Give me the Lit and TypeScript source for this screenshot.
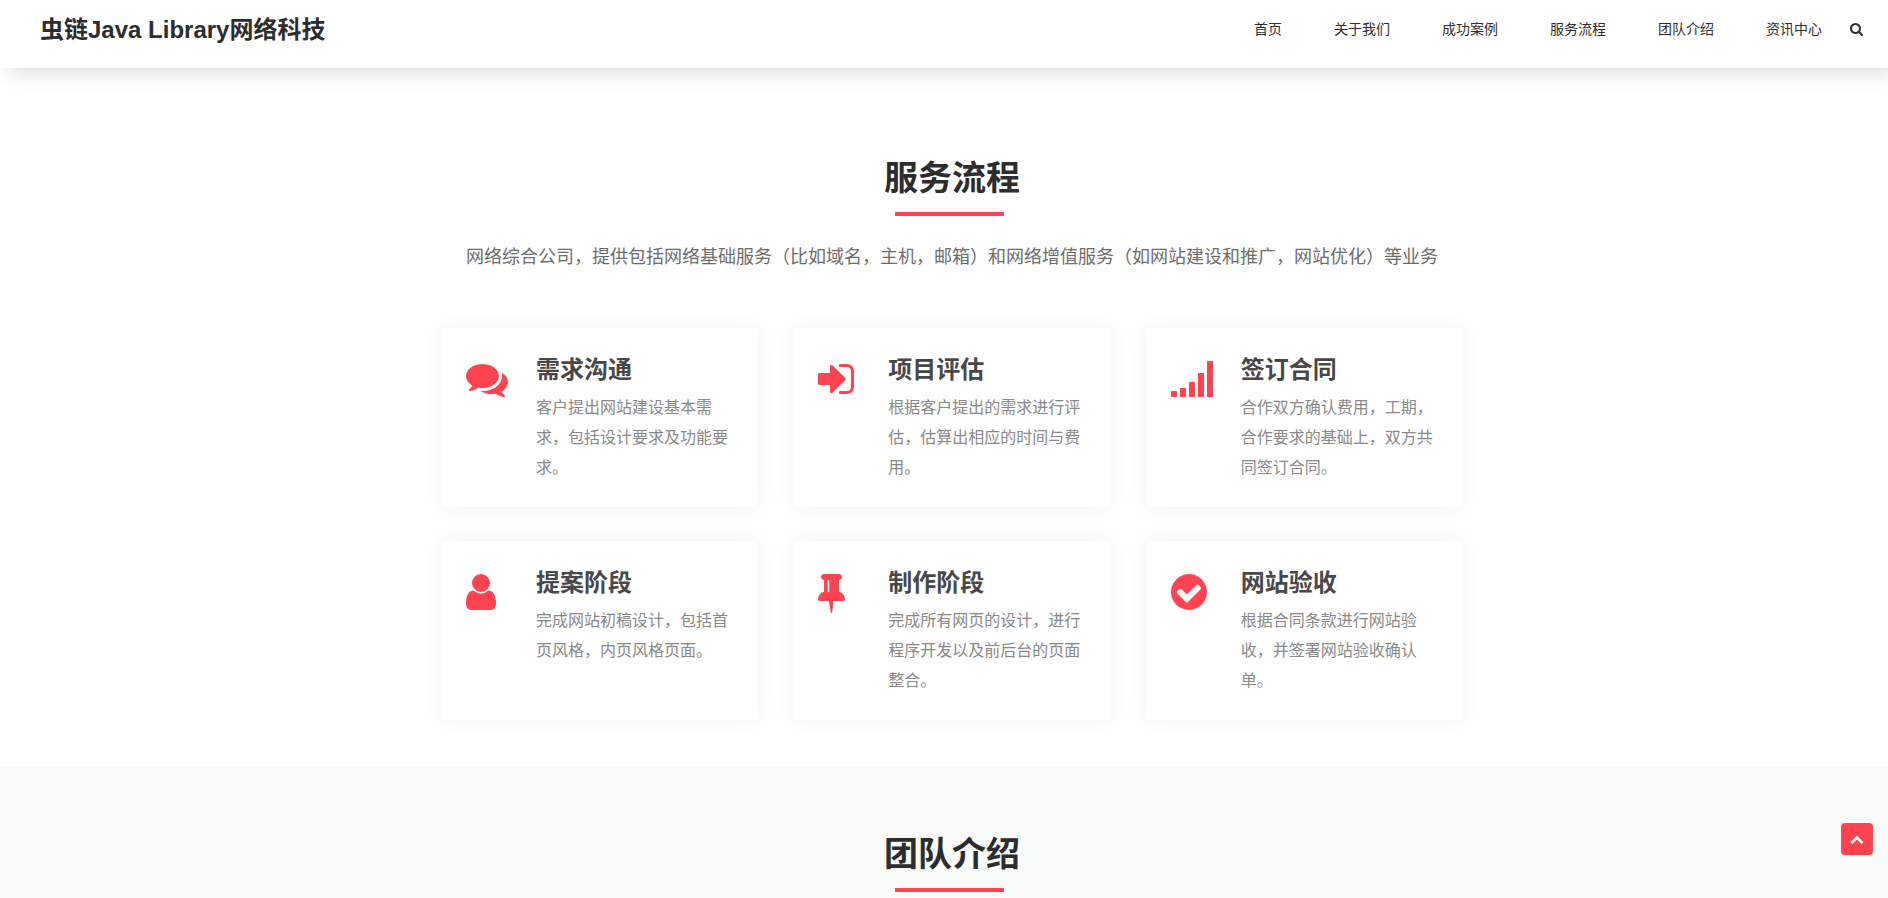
import { LitElement, html, css, svg } from "lit";
import { customElement, property } from "lit/decorators.js";

const ICONS: Record<string, { box: string; w: number; h: number; d: string }> = {
  comments: {
    box: "0 0 1792 1792", w: 42, h: 42,
    d: "M1408 768q0 139-94 257t-256.5 186.5-353.5 68.5q-86 0-176-16-124 88-278 128-36 9-86 16h-3q-11 0-20.5-8t-11.5-21q-1-3-1-6.5t.5-6.5 2-6l2.5-5 3.5-5.5 4-5 4.5-5 4-4.5q5-6 23-25t26-29.5 22.5-29 25-38.5 20.5-44q-124-72-195-177t-71-224q0-139 94-257t256.5-186.5 353.5-68.5 353.5 68.5 256.5 186.5 94 257zm384 256q0 120-71 224.5t-195 176.5q10 24 20.5 44t25 38.5 22.5 29 26 29.5 23 25q1 1 4 4.5t4.5 5 4 5 3.5 5.5l2.5 5 2 6 .5 6.5-1 6.5q-3 14-13 22t-22 7q-50-7-86-16-154-40-278-128-90 16-176 16-271 0-472-132 58 4 88 4 161 0 309-45t264-129q125-92 192-212t67-254q0-77-23-152 129 71 204 178t75 230z",
  },
  signIn: {
    box: "128 0 1536 1792", w: 36, h: 42,
    d: "M1312 896q0 26-19 45l-544 544q-19 19-45 19t-45-19-19-45v-288h-448q-26 0-45-19t-19-45v-384q0-26 19-45t45-19h448v-288q0-26 19-45t45-19 45 19l544 544q19 19 19 45zm352-352v704q0 119-84.5 203.5t-203.5 84.5h-320q-13 0-22.5-9.5t-9.5-22.5q0-4-1-20t-.5-26.5 3-23.5 10-19.5 20.5-6.5h320q66 0 113-47t47-113v-704q0-66-47-113t-113-47h-312l-11.5-1-11.5-3-8-5.5-7-9-2-13.5q0-4-1-20t-.5-26.5 3-23.5 10-19.5 20.5-6.5h320q119 0 203.5 84.5t84.5 203.5z",
  },
  signal: {
    box: "0 0 1792 1792", w: 42, h: 42,
    d: "M32 1408h192q32 0 32 32v192q0 32-32 32h-192q-32 0-32-32v-192q0-32 32-32zM416 1280h192q32 0 32 32v320q0 32-32 32h-192q-32 0-32-32v-320q0-32 32-32zM800 1024h192q32 0 32 32v576q0 32-32 32h-192q-32 0-32-32v-576q0-32 32-32zM1184 640h192q32 0 32 32v960q0 32-32 32h-192q-32 0-32-32v-960q0-32 32-32zM1568 128h192q32 0 32 32v1472q0 32-32 32h-192q-32 0-32-32v-1472q0-32 32-32z",
  },
  user: {
    box: "256 0 1280 1792", w: 30, h: 42,
    d: "M1536 1399q0 109-62.5 187t-150.5 78h-854q-88 0-150.5-78t-62.5-187q0-85 8.5-160.5t31.5-152 58.5-131 94-89 134.5-34.5q131 128 313 128t313-128q76 0 134.5 34.5t94 89 58.5 131 31.5 152 8.5 160.5zm-256-887q0 159-112.5 271.5t-271.5 112.5-271.5-112.5-112.5-271.5 112.5-271.5 271.5-112.5 271.5 112.5 112.5 271.5z",
  },
  tack: {
    box: "320 0 1152 1792", w: 27, h: 42,
    d: "M800 864v-448q0-14-9-23t-23-9-23 9-9 23v448q0 14 9 23t23 9 23-9 9-23zm672 352q0 26-19 45t-45 19h-429l-51 483q-2 12-10.5 20.5t-20.5 8.5h-1q-27 0-32-27l-76-485h-404q-26 0-45-19t-19-45q0-123 78.5-221.5t177.5-98.5v-512q-52 0-90-38t-38-90 38-90 90-38h640q52 0 90 38t38 90-38 90-90 38v512q99 0 177.5 98.5t78.5 221.5z",
  },
  check: {
    box: "128 0 1536 1792", w: 36, h: 42,
    d: "M1412 734q0-28-18-46l-91-90q-19-19-45-19t-45 19l-408 407-226-226q-19-19-45-19t-45 19l-91 90q-18 18-18 46 0 27 18 45l362 362q19 19 45 19 27 0 46-19l543-543q18-18 18-45zm252 162q0 209-103 385.5t-279.5 279.5-385.5 103-385.5-103-279.5-279.5-103-385.5 103-385.5 279.5-279.5 385.5-103 385.5 103 279.5 279.5 103 385.5z",
  },
  search: {
    box: "64 0 1664 1792", w: 13, h: 14,
    d: "M1216 832q0-185-131.5-316.5t-316.5-131.5-316.5 131.5-131.5 316.5 131.5 316.5 316.5 131.5 316.5-131.5 131.5-316.5zm512 832q0 52-38 90t-90 38q-54 0-90-38l-343-342q-179 124-399 124-143 0-273.5-55.5t-225-150-150-225-55.5-273.5 55.5-273.5 150-225 225-150 273.5-55.5 273.5 55.5 225 150 150 225 55.5 273.5q0 220-124 399l343 343q37 37 37 90z",
  },
  up: {
    box: "0 0 1792 1792", w: 14, h: 14,
    d: "M1683 1331l-166 165q-19 19-45 19t-45-19l-531-531-531 531q-19 19-45 19t-45-19l-166-165q-19-19-19-45.5t19-45.5l742-741q19-19 45-19t45 19l742 741q19 19 19 45.5t-19 45.5z",
  },
};

const icon = (name: string) => {
  const i = ICONS[name];
  return html`<svg width=${i.w} height=${i.h} viewBox=${i.box} fill="currentColor" aria-hidden="true">
    ${svg`<path d=${i.d}></path>`}
  </svg>`;
};

@customElement("step-card")
export class StepCard extends LitElement {
  @property() icon = "";
  @property() heading = "";
  @property() text = "";

  static styles = css`
    :host {
      display: flex;
      padding: 24px;
      background: #fff;
      box-shadow: 0 0 20px rgba(0, 0, 0, 0.06);
    }
    .icon {
      flex: 0 0 70px;
      padding-top: 6px;
      color: #ff434f;
    }
    svg {
      display: block;
    }
    .body {
      flex: 1;
      min-width: 0;
    }
    h3 {
      margin: 0 0 5px;
      font-size: 24px;
      line-height: 36px;
      font-weight: 700;
      color: #484848;
    }
    p {
      margin: 0;
      font-size: 16px;
      line-height: 30px;
      color: #888;
    }
  `;

  render() {
    return html`
      <div class="icon">${icon(this.icon)}</div>
      <div class="body">
        <h3>${this.heading}</h3>
        <p>${this.text}</p>
      </div>
    `;
  }
}

const NAV = ["首页", "关于我们", "成功案例", "服务流程", "团队介绍", "资讯中心"];

const STEPS = [
  { icon: "comments", heading: "需求沟通", text: "客户提出网站建设基本需求，包括设计要求及功能要求。" },
  { icon: "signIn", heading: "项目评估", text: "根据客户提出的需求进行评估，估算出相应的时间与费用。" },
  { icon: "signal", heading: "签订合同", text: "合作双方确认费用，工期，合作要求的基础上，双方共同签订合同。" },
  { icon: "user", heading: "提案阶段", text: "完成网站初稿设计，包括首页风格，内页风格页面。" },
  { icon: "tack", heading: "制作阶段", text: "完成所有网页的设计，进行程序开发以及前后台的页面整合。" },
  { icon: "check", heading: "网站验收", text: "根据合同条款进行网站验收，并签署网站验收确认单。" },
];

@customElement("app-root")
export class AppRoot extends LitElement {
  static styles = css`
    :host {
      display: flex;
      flex-direction: column;
      height: 100vh;
      overflow: hidden;
      background: #fff;
      color: #2d2d2d;
      font-family: "Liberation Sans", "Noto Sans CJK SC", sans-serif;
    }
    header {
      position: relative;
      z-index: 1;
      display: flex;
      flex-shrink: 0;
      justify-content: space-between;
      align-items: center;
      padding: 8px 25px 18px 40px;
      background: #fff;
      box-shadow: 8px 4px 20px rgba(0, 0, 0, 0.14);
    }
    a {
      color: inherit;
      text-decoration: none;
    }
    .logo {
      padding-top: 2px;
      font-size: 24px;
      line-height: 40px;
      font-weight: 700;
    }
    nav {
      display: flex;
      align-items: center;
      gap: 52px;
      font-size: 14px;
      line-height: 20px;
    }
    .tools {
      display: flex;
      align-items: center;
      gap: 28px;
    }
    button {
      display: flex;
      align-items: center;
      justify-content: center;
      padding: 0;
      border: 0;
      background: none;
      color: inherit;
      cursor: pointer;
    }
    section {
      flex-shrink: 0;
      padding-left: 16px;
    }
    .process {
      padding-top: 85px;
      padding-bottom: 47px;
    }
    .team {
      flex: 1 0 auto;
      padding-top: 62px;
      background: #f9fbfa;
    }
    h2 {
      width: fit-content;
      margin: 0 auto;
      font-size: 34px;
      line-height: 50px;
      font-weight: 700;
    }
    h2::after {
      content: "";
      display: block;
      width: 80%;
      height: 4px;
      margin: 9px 0 0 11px;
      background: #ff434f;
    }
    .lead {
      margin: 25px 0 55px;
      font-size: 18px;
      line-height: 32px;
      text-align: center;
      color: #6c6c6c;
    }
    .grid {
      display: grid;
      grid-template-columns: repeat(3, 1fr);
      gap: 34px 37px;
      max-width: 1020px;
      margin: 0 auto;
    }
    .top {
      position: fixed;
      right: 15px;
      bottom: 43px;
      z-index: 2;
      width: 32px;
      height: 32px;
      border-radius: 4px;
      background: #ff434f;
      color: #fff;
    }
  `;

  render() {
    return html`
      <header>
        <a class="logo" href="#">虫链Java Library网络科技</a>
        <div class="tools">
          <nav>${NAV.map((n) => html`<a href="#">${n}</a>`)}</nav>
          <button aria-label="搜索">${icon("search")}</button>
        </div>
      </header>
      <section class="process">
        <h2>服务流程</h2>
        <p class="lead">网络综合公司，提供包括网络基础服务（比如域名，主机，邮箱）和网络增值服务（如网站建设和推广，网站优化）等业务</p>
        <div class="grid">
          ${STEPS.map((s) => html`<step-card .icon=${s.icon} .heading=${s.heading} .text=${s.text}></step-card>`)}
        </div>
      </section>
      <section class="team">
        <h2>团队介绍</h2>
      </section>
      <button class="top" aria-label="返回顶部">${icon("up")}</button>
    `;
  }
}
